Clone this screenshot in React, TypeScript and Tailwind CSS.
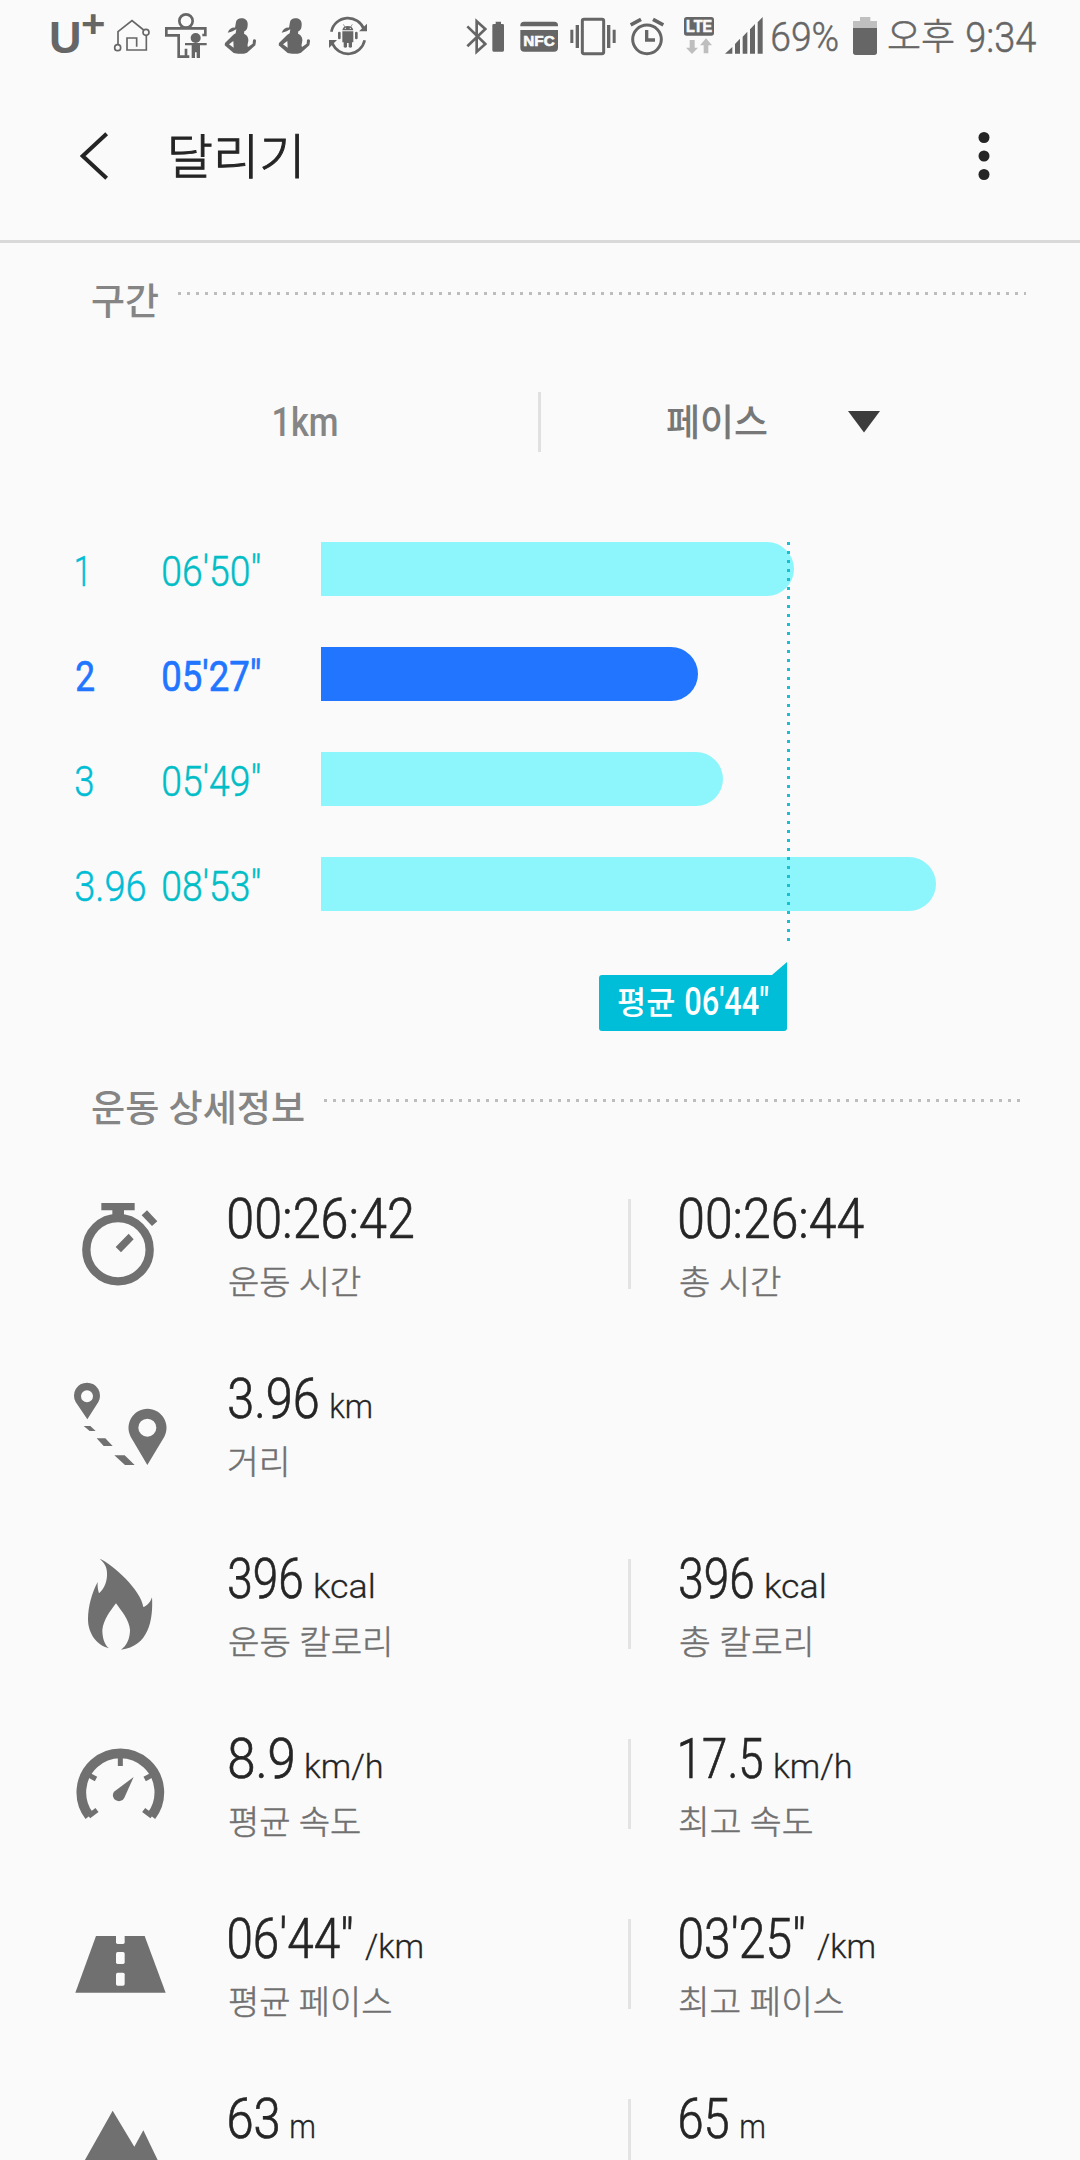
import React, { useLayoutEffect, useRef, useState } from "react";

/** A line of text whose drawn glyphs are fitted to `w` pixels. */
function Fit({ w, className = "", children }: { w: number; className?: string; children: string }) {
  const ref = useRef<HTMLSpanElement>(null);
  const [transform, setTransform] = useState("none");
  useLayoutEffect(() => {
    const el = ref.current;
    const ctx = document.createElement("canvas").getContext("2d");
    if (!el || !ctx) return;
    const cs = getComputedStyle(el);
    ctx.font = `${cs.fontWeight} ${cs.fontSize} ${cs.fontFamily}`;
    const m = ctx.measureText(children);
    const ink = m.actualBoundingBoxLeft + m.actualBoundingBoxRight;
    setTransform(`scaleX(${w / ink}) translateX(${m.actualBoundingBoxLeft}px)`);
  }, [w, children]);
  return (
    <span className={"block shrink-0 whitespace-nowrap " + className} style={{ width: w }}>
      <span ref={ref} className="inline-block origin-left whitespace-pre" style={{ transform }}>
        {children}
      </span>
    </span>
  );
}

function Glyph({ x, w, className = "", children }: { x: number; w: number; className?: string; children: React.ReactNode }) {
  return (
    <svg className={"h-[75px] shrink-0 " + className} width={w} height={75} viewBox={`${x} 0 ${w * 3} 225`} fill="#666" stroke="none">
      {children}
    </svg>
  );
}

function Runner({ className }: { className: string }) {
  return (
    <Glyph x={582} w={33} className={className}>
      <path d="M618 66 C620 56 630 53 638 55 C650 57 654 66 653 75 C653 84 650 92 643 94 L642 101 C650 104 656 112 655 122 C654 130 651 136 654 141 L668 131 L669 120 C672 116 679 118 678 124 L676 136 L651 158 C640 163 620 162 611 159 L584 136 L585 129 L610 104 L617 100 L619 88 C611 92 606 96 593 98 C598 86 606 82 615 83 Z" />
      <path d="M597 133 L610 123 L611 143 Z" fill="#fafafa" />
    </Glyph>
  );
}

function StatusBar() {
  return (
    <div className="flex h-[75px] items-center pl-[51px] text-[#666]">
      <Fit w={28} className="font-['Liberation_Sans'] text-[45px] leading-[72px] font-bold">U</Fit>
      <Fit w={22} className="ml-[3px] h-[75px] font-['Liberation_Sans'] text-[38px] leading-[49px] font-bold">+</Fit>
      <Glyph x={249} w={38} className="ml-[9px]">
        <g fill="none" stroke="#666" strokeWidth="5">
          <path d="M264 133 V95 L306 62 L341 90 M349 107 V150 H291 V114 H320 V140" />
          <circle cx="348" cy="97" r="9" />
          <circle cx="263" cy="143" r="9" />
        </g>
      </Glyph>
      <Glyph x={402} w={44} className="ml-[13px]">
        <g fill="none" stroke="#666" strokeWidth="8">
          <circle cx="468" cy="63" r="20" />
          <path d="M517 105 H526 V85 H409 V106 H446 V170 H478 M468 170 V146" />
        </g>
        <circle cx="497" cy="114" r="15" />
        <path d="M465 129 H530 V136 H510 V174 H500 V157 H495 V174 H485 V136 H465 Z" />
      </Glyph>
      <Runner className="ml-[16px]" />
      <Runner className="ml-[21px]" />
      <Glyph x={894} w={40} className="ml-[17px]">
        <g fill="none" stroke="#666" strokeWidth="8">
          <path d="M904 95 A51 51 0 0 1 1002 88" />
          <path d="M1004 121 A51 51 0 0 1 907 130" />
        </g>
        <path d="M1011 71 V94 H987 Z M897 120 H921 L897 144 Z" />
        <path d="M937 91 C938 82 944 78 953 78 C963 78 969 82 970 91 Z M937 94 H970 V127 H966 V141 Q961 145 956 141 V129 H951 V141 Q946 145 941 141 V127 H937 Z" />
        <path d="M940 73 L945 81 M967 73 L962 81" stroke="#666" strokeWidth="2" />
        <rect x="924" y="95" width="8" height="23" rx="4" />
        <rect x="975" y="95" width="8" height="23" rx="4" />
        <circle cx="946" cy="85" r="2" fill="#fafafa" />
        <circle cx="961" cy="85" r="2" fill="#fafafa" />
      </Glyph>

      <Glyph x={48} w={21} className="ml-[98px]">
        <path d="M52 79 L106 132 L80 155 V64 L106 87 L52 139" fill="none" stroke="#666" strokeWidth="8" />
      </Glyph>
      <Glyph x={126} w={12} className="ml-[5px]">
        <path d="M137 65 H153 V72 H158 Q162 72 162 76 V151 Q162 155 158 155 H131 Q127 155 127 151 V76 Q127 72 131 72 H137 Z" />
      </Glyph>
      <Glyph x={210} w={38} className="ml-[16px]">
        <path d="M211 79 V76 Q211 65 222 65 H313 Q324 65 324 76 V79 Z" />
        <path d="M211 90 H324 V143 Q324 155 312 155 H223 Q211 155 211 143 Z" />
        <text x="267" y="139" textAnchor="middle" textLength="94" lengthAdjust="spacingAndGlyphs" className="fill-[#fafafa] font-['Liberation_Sans'] text-[46px] font-bold" stroke="#fafafa" strokeWidth="2">NFC</text>
      </Glyph>
      <Glyph x={360} w={46} className="ml-[12px]">
        <rect x="397" y="58" width="64" height="103" rx="5" fill="none" stroke="#666" strokeWidth="9" />
        <path d="M361 89 H370 V129 H361 Z M377 75 H387 V144 H377 Z M471 75 H481 V144 H471 Z M488 89 H497 V129 H488 Z" />
      </Glyph>
      <Glyph x={540} w={34} className="ml-[14px]">
        <circle cx="591" cy="118" r="43" fill="none" stroke="#666" strokeWidth="9" />
        <path d="M590 90 V120 H615" fill="none" stroke="#666" strokeWidth="10" />
        <path d="M542 75 L573 58 M640 75 L609 58" stroke="#666" strokeWidth="11" />
      </Glyph>
      <Glyph x={702} w={30} className="ml-[20px]">
        <rect x="702" y="51" width="90" height="56" rx="8" />
        <text x="747" y="97" textAnchor="middle" textLength="78" lengthAdjust="spacingAndGlyphs" className="fill-[#fafafa] font-['Liberation_Sans'] text-[50px] font-bold" stroke="#fafafa" strokeWidth="2">LTE</text>
        <path d="M719 120 H734 V143 H744 L726 162 L708 143 H719 Z M768 115 L786 136 H775 V160 H761 V136 H750 Z" fill="#bebebe" />
      </Glyph>
      <Glyph x={825} w={38} className="ml-[11px]">
        <path d="M825 161 L847 141 V161 Z M855 132 L870 116 V161 H855 Z M878 110 L892 95 V161 H878 Z M900 88 L915 72 V161 H900 Z M923 67 L938 51 V161 H923 Z" />
      </Glyph>
      <Fit w={66} className="ml-[9px] text-[41px] leading-[73px] font-light [-webkit-text-stroke:0.5px]">69%</Fit>
      <Glyph x={279} w={24} className="ml-[15px]">
        <path d="M279 84 V63 H300 V51 H331 V63 H351 V84 Z" fill="#c0c0c0" />
        <path d="M279 84 H351 V157 Q351 165 343 165 H287 Q279 165 279 157 Z" />
      </Glyph>
      <Fit w={64} className="ml-[12px] text-[37px] leading-[73px] font-light [-webkit-text-stroke:0.6px]">오후</Fit>
      <Fit w={69} className="ml-[14px] text-[42px] leading-[75px] font-light [-webkit-text-stroke:0.5px]">9:34</Fit>
    </div>
  );
}

function Header() {
  return (
    <header className="flex h-[168px] items-center border-b-[3px] border-[#d9d9d9] pl-[80px]">
      <svg className="mb-[3px]" width="29" height="50" viewBox="120 93 87 150" fill="none">
        <path d="M200 101 L128 168 L200 235" stroke="#252525" strokeWidth="12" />
      </svg>
      <Fit w={128} className="ml-[62px] text-[48px] leading-[80px] font-light text-[#252525] [-webkit-text-stroke:1px]">달리기</Fit>
      <svg className="mb-[3px] ml-[678px]" width="14" height="52" viewBox="0 0 14 52" fill="#252525">
        <circle cx="7" cy="7.5" r="5.5" />
        <circle cx="7" cy="26" r="5.5" />
        <circle cx="7" cy="44.5" r="5.5" />
      </svg>
    </header>
  );
}

function SectionTitle({ w, pad, children }: { w: number; pad: string; children: string }) {
  return (
    <div className={"flex h-[50px] pl-[92px] " + pad}>
      <Fit w={w} className="text-[37px] leading-[52px] font-medium text-[#858585]">{children}</Fit>
      <div className="mt-[15px] ml-[20px] h-[3px] grow bg-[repeating-linear-gradient(90deg,#bdbdbd_0_3px,transparent_3px_9px)]" />
    </div>
  );
}

const splits = [
  { n: "1", nw: 9, t: "06'50\"", bar: 473, best: false },
  { n: "2", nw: 18, t: "05'27\"", bar: 377, best: true },
  { n: "3", nw: 17, t: "05'49\"", bar: 402, best: false },
  { n: "3.96", nw: 69, t: "08'53\"", bar: 615, best: false },
];

function Chart() {
  return (
    <div className="relative mt-[90px] flex flex-col gap-[51px]">
      {splits.map((s) => (
        <div
          key={s.n}
          className={
            "flex h-[54px] pl-[76px] text-[43px] leading-[58px] " +
            (s.best ? "font-normal text-[#2175ff] [-webkit-text-stroke:0.7px]" : "font-light text-[#00bdd6] [-webkit-text-stroke:0.5px]")
          }
        >
          <div className="w-[87px]">
            <Fit w={s.nw}>{s.n}</Fit>
          </div>
          <Fit w={97} className={s.best ? "" : "text-[#00bdc6]"}>{s.t}</Fit>
          <div className={"ml-[61px] h-[54px] rounded-r-full " + (s.best ? "bg-[#2175ff]" : "bg-[#8df5fc]")} style={{ width: s.bar }} />
        </div>
      ))}
      <div className="absolute top-0 left-[787px] h-[399px] w-[3px] bg-[repeating-linear-gradient(180deg,#17bfd2_0_3px,transparent_3px_9px)]" />
    </div>
  );
}

function AverageFlag() {
  return (
    <div className="relative mt-[64px] ml-[599px] flex h-[56px] w-[188px] rounded-[3px] bg-[#00bdd8] pl-[19px] text-white">
      <svg className="absolute -top-[13px] right-0" width="15" height="18" viewBox="0 0 15 18" fill="#00bdd8">
        <path d="M15 0 V18 H0 V13 Z" />
      </svg>
      <Fit w={56} className="text-[32px] leading-[56px] font-medium">평균</Fit>
      <Fit w={83} className="ml-[11px] text-[39px] leading-[54px] font-medium">06'44"</Fit>
    </div>
  );
}

type Stat = { v: string; vw: number; u?: string; uw?: number; l?: string; lw?: number };

function StatCell({ s }: { s: Stat }) {
  return (
    <div>
      <div className="flex h-[56px] gap-[13px] text-[#252525]">
        <Fit w={s.vw} className="text-[56px] leading-[56px] font-light [-webkit-text-stroke:0.7px]">{s.v}</Fit>
        {s.u ? <Fit w={s.uw ?? 40} className="text-[34px] leading-[71px] font-light [-webkit-text-stroke:0.3px]">{s.u}</Fit> : null}
      </div>
      {s.l ? (
        <Fit w={s.lw ?? 132} className="mt-[15px] text-[33px] leading-[41px] font-light text-[#707070] [-webkit-text-stroke:0.5px]">{s.l}</Fit>
      ) : null}
    </div>
  );
}

const stats: { view: string; icon: React.ReactNode; a: Stat; b?: Stat }[] = [
  {
    view: "30 333 300 330",
    icon: (
      <>
        <circle cx="174" cy="509" r="95" fill="none" stroke="#707070" strokeWidth="25" />
        <path d="M124 369 H224 V391 H192 V410 H157 V391 H124 Z M261 391 L292 424 L276 438 L245 406 Z M206 461 L221 478 L183 517 L167 501 Z" />
      </>
    ),
    a: { v: "00:26:42", vw: 184, l: "운동 시간", lw: 132 },
    b: { v: "00:26:44", vw: 184, l: "총 시간", lw: 101 },
  },
  {
    view: "30 873 300 330",
    icon: (
      <path
        fillRule="evenodd"
        d="M82 1018 L47 966 A39 39 0 1 1 115 966 Z M81 931 A18 18 0 1 0 81 967 A18 18 0 1 0 81 931 Z M262 1155 L212 1070 A57 57 0 1 1 313 1070 Z M262 1016 A27 27 0 1 0 262 1070 A27 27 0 1 0 262 1016 Z M71 1038 H91 L107 1053 H89 Z M110 1075 H136 L158 1098 H131 Z M163 1126 H194 L224 1155 H195 Z"
      />
    ),
    a: { v: "3.96", vw: 89, u: "km", uw: 40, l: "거리", lw: 57 },
  },
  {
    view: "30 63 300 330",
    icon: (
      <path d="M119 86 C160 104 243 180 250 231 C262 228 272 215 276 202 C280 270 266 350 183 359 C200 348 210 325 210 300 C208 270 185 244 168 220 C150 244 130 270 127 300 C127 320 132 343 147 355 C110 346 84 310 84 268 C84 230 95 190 113 156 C112 170 114 180 117 190 C135 175 142 150 141 130 C141 110 132 97 119 86 Z" />
    ),
    a: { v: "396", vw: 73, u: "kcal", uw: 58, l: "운동 칼로리", lw: 160 },
    b: { v: "396", vw: 73, u: "kcal", uw: 58, l: "총 칼로리", lw: 130 },
  },
  {
    view: "30 603 300 330",
    icon: (
      <>
        <g fill="none" stroke="#707070">
          <path d="M88 858 A117 117 0 1 1 274 858" strokeWidth="29" />
          <path d="M181 680 V708 M84 734 L108 747 M278 734 L254 747 M86 859 L111 840 M276 859 L251 840" strokeWidth="15" />
        </g>
        <path d="M221 741 L162 785 A18 18 0 1 0 193 803 Z" />
      </>
    ),
    a: { v: "8.9", vw: 64, u: "km/h", uw: 76, l: "평균 속도", lw: 131 },
    b: { v: "17.5", vw: 82, u: "km/h", uw: 76, l: "최고 속도", lw: 132 },
  },
  {
    view: "30 93 300 330",
    icon: (
      <>
        <path d="M108 168 H254 L317 338 H46 Z" />
        <g fill="#fafafa">
          <path d="M168 165 H194 V187 Q194 192 189 192 H173 Q168 192 168 187 Z" />
          <rect x="168" y="216" width="26" height="36" rx="5" />
          <rect x="168" y="278" width="26" height="39" rx="5" />
        </g>
      </>
    ),
    a: { v: "06'44\"", vw: 123, u: "/km", uw: 57, l: "평균 페이스", lw: 162 },
    b: { v: "03'25\"", vw: 124, u: "/km", uw: 57, l: "최고 페이스", lw: 163 },
  },
  {
    view: "30 633 300 330",
    icon: <path d="M158 692 L223 800 L250 751 L346 950 H13 Z" />,
    a: { v: "63", vw: 49, u: "m", uw: 23 },
    b: { v: "65", vw: 48, u: "m", uw: 23 },
  },
];

export default function App() {
  return (
    <div className="h-[2160px] w-[1080px] overflow-hidden bg-[#fafafa] font-[Roboto,'Noto_Sans_CJK_KR',sans-serif]">
      <StatusBar />
      <Header />
      <div className="h-[34px]" />
      <SectionTitle w={66} pad="pr-[54px]">구간</SectionTitle>
      <div className="mt-[65px] flex h-[60px] text-[#777]">
        <div className="flex w-[538px] pl-[274px]">
          <Fit w={63} className="text-[41px] leading-[61px] font-medium text-[#858585]">1km</Fit>
        </div>
        <div className="w-[3px] bg-[#e0e0e0]" />
        <Fit w={100} className="ml-[126px] text-[37px] leading-[63px] font-medium">페이스</Fit>
        <svg className="mt-[19px] ml-[81px]" width="32" height="22" viewBox="0 0 32 22" fill="#3c3c3c">
          <path d="M0 0 H32 L16 21.5 Z" />
        </svg>
      </div>
      <Chart />
      <AverageFlag />
      <div className="h-[53px]" />
      <SectionTitle w={212} pad="pr-[57px]">운동 상세정보</SectionTitle>
      <div className="mt-[57px]">
        {stats.map((row) => (
          <div key={row.view} className="flex h-[180px] pl-[70px]">
            <svg width="100" height="110" viewBox={row.view} fill="#707070">{row.icon}</svg>
            <div className="ml-[59px] w-[399px]">
              <StatCell s={row.a} />
            </div>
            {row.b ? (
              <>
                <div className="mt-[8px] mr-[49px] h-[90px] w-[3px] bg-[#e3e3e3]" />
                <StatCell s={row.b} />
              </>
            ) : null}
          </div>
        ))}
      </div>
    </div>
  );
}
